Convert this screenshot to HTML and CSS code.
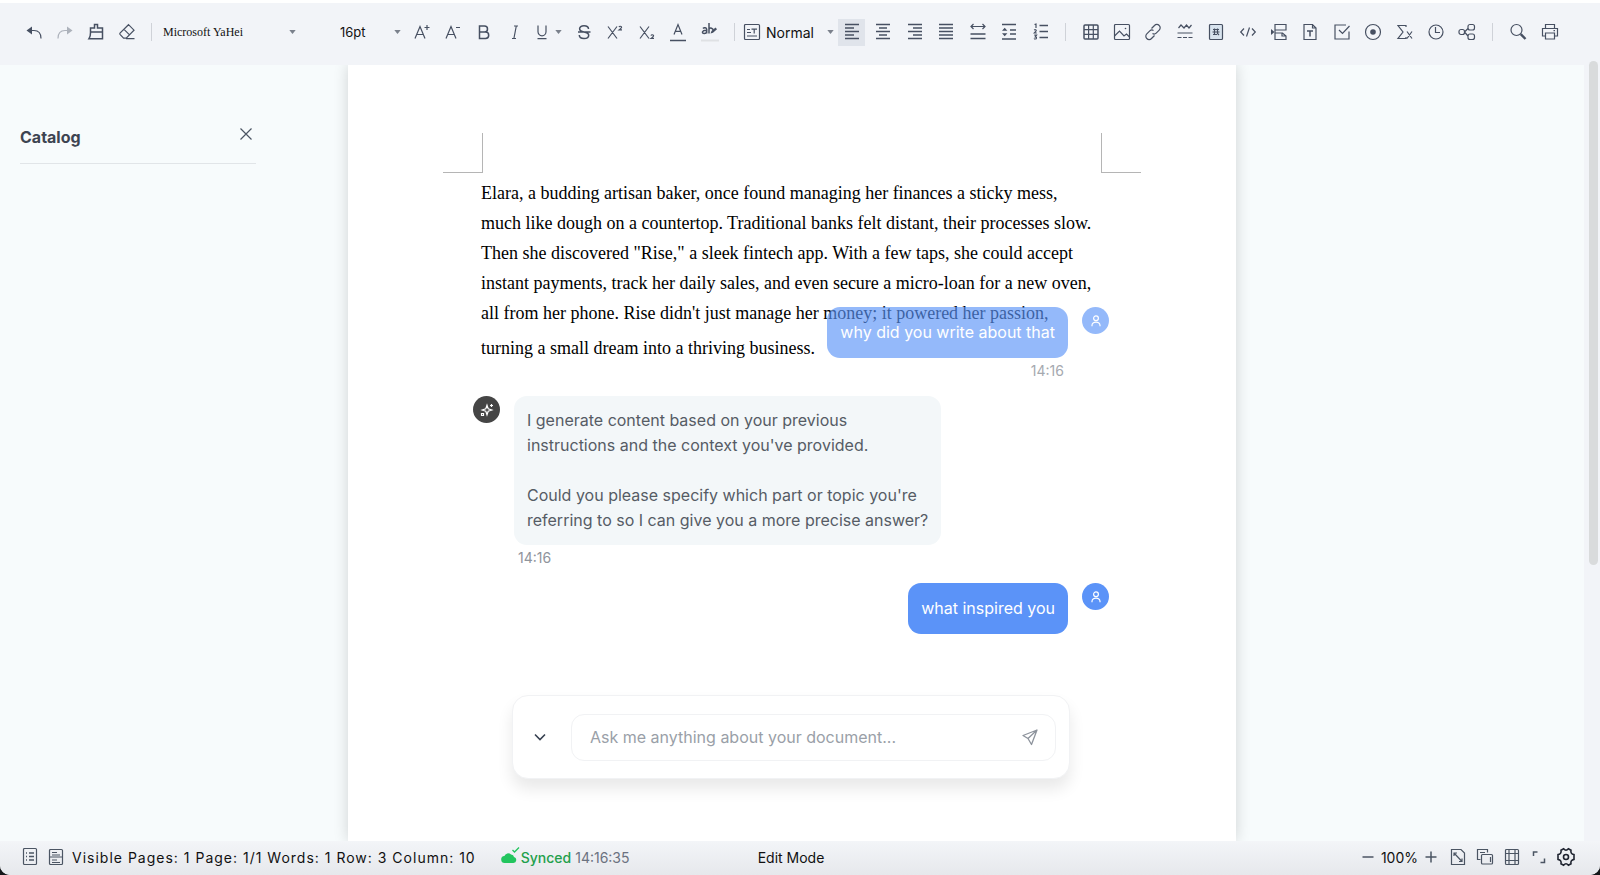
FILE: index.html
```html
<!DOCTYPE html>
<html lang="en">
<head>
<meta charset="utf-8">
<title>Document editor</title>
<link rel="stylesheet" href="styles.css">
</head>
<body>
<div class="app">
  <header class="toolbar" role="toolbar" aria-label="Formatting">
    <div class="group group-4">
      <button class="tool" aria-label="Undo"><svg class="icon" viewBox="0 0 20 20"><path d="M7 8.500h3c4.500 0 7 2.500 7 8"/><path class="fill" d="M2.500 8.500 8 4.500v8z"/></svg></button>
      <button class="tool faded" aria-label="Redo"><svg class="icon" viewBox="0 0 20 20"><path d="M13 8.500h-3c-4.500 0-7 2.500-7 8"/><path class="fill" d="M17.500 8.500 12 4.500v8z"/></svg></button>
      <button class="tool" aria-label="Format painter"><svg class="icon" viewBox="0 0 20 20"><path class="mid" d="M8.500 6V2.600h3V6h5v10.700H3c1-1.400 1.500-4 1.500-6V6zM4.500 10h12"/></svg></button>
      <button class="tool" aria-label="Clear format"><svg class="icon" viewBox="0 0 20 20"><path d="M11.500 2.700 17 8.200l-7.800 7.900H6.600L3 12.300a1 1 0 0 1 0-1.200zM7 7.400l5.300 5.300M9 16.700h8.500"/></svg></button>
    </div>
    <span class="sep"></span>
    <label class="pick pick-font"><select class="serif" aria-label="Font"><option>Microsoft YaHei</option></select><svg class="caret" viewBox="0 0 8 5"><path d="M0 0h8L4 5z"/></svg></label>
    <label class="pick pick-size"><select aria-label="Font size"><option>16pt</option></select><svg class="caret" viewBox="0 0 8 5"><path d="M0 0h8L4 5z"/></svg></label>
    <div class="group group-4">
      <button class="tool" aria-label="Increase font"><svg class="icon" viewBox="0 0 20 20"><path d="M3 16.500 8 4.500l5 12M4.800 12.500h6.400M15 3v5M12.500 5.500h5"/></svg></button>
      <button class="tool" aria-label="Decrease font"><svg class="icon" viewBox="0 0 20 20"><path d="M3 16.500 8 4.500l5 12M4.800 12.500h6.400M13 5.500h4"/></svg></button>
      <button class="tool" aria-label="Bold"><svg class="icon" viewBox="0 0 20 20"><path class="mid" d="M5.500 4h5a3 3 0 0 1 0 6h-5zM5.500 10h6a3.200 3.200 0 0 1 0 6.400h-6z"/></svg></button>
      <button class="tool" aria-label="Italic"><svg class="icon" viewBox="0 0 20 20"><path d="M9 4h4M7 16.500h4M11.300 4l-2.400 12.500"/></svg></button>
    </div>
    <button class="tool" aria-label="Underline"><svg class="icon" viewBox="0 0 20 20"><path d="M6 3.500v6.300a4 4 0 0 0 8 0V3.500M5.500 16.700h9"/></svg></button>
    <button class="caret-button" aria-label="Underline style"><svg class="caret" viewBox="0 0 8 5"><path d="M0 0h8L4 5z"/></svg></button>
    <div class="group group-5">
      <button class="tool" aria-label="Strikethrough"><svg class="icon" viewBox="0 0 20 20"><path class="mid" d="M14.500 7c0-2-1.800-3.300-4.500-3.300S5.600 5 5.600 6.800C5.600 8.600 7.200 9.500 10 10c3 .5 4.700 1.300 4.700 3.200 0 2-1.900 3.300-4.700 3.300s-4.700-1.400-4.700-3.500M4 10h12.500"/></svg></button>
      <button class="tool" aria-label="Superscript"><svg class="icon" viewBox="0 0 20 20"><path d="m3 4.500 9 12M12 4.500l-9 12M14 5.200c.3-1.300 2.600-1.300 2.600.1 0 1-1.600 1.700-2.600 2.600h3"/></svg></button>
      <button class="tool" aria-label="Subscript"><svg class="icon" viewBox="0 0 20 20"><path d="m3 4.500 9 12M12 4.500l-9 12M14 13.700c.3-1.300 2.600-1.300 2.600.1 0 1-1.600 1.700-2.600 2.600h3"/></svg></button>
      <button class="tool" aria-label="Font color"><svg class="icon" viewBox="0 0 20 20"><path d="M6 12.500 10 2.500l4 10M7.400 9.300h5.200"/><path class="mid" d="M2 18.500h16"/></svg></button>
      <button class="tool" aria-label="Highlight"><svg class="icon" viewBox="0 0 20 20"><path class="mid" d="M3 6.500c1-1.300 3.700-1 3.700 1v4M6.700 8.300c-5-.3-5.200 3.200-2.500 3.200 1.500 0 2.500-.8 2.500-2M9 1v10.500M9 7c1-1.700 4.400-1.200 4.400 2"/><path class="fill" d="m10.500 11.500 1-2.500 4-3.500 1.500 1.700-4 3.500z"/><path class="pale" d="M1 18.500h18"/></svg></button>
    </div>
    <span class="sep"></span>
    <label class="pick pick-style"><svg class="icon" viewBox="0 0 20 20"><rect x="2.500" y="2.500" width="15" height="15" rx="1"/><path d="M5 7.500h3M5 10.500h4M5 14h10M9.500 7.200h5.500M12.200 7.200v4.300"/></svg><select class="style" aria-label="Paragraph style"><option>Normal</option></select><svg class="caret" viewBox="0 0 8 5"><path d="M0 0h8L4 5z"/></svg></label>
    <div class="group group-7">
      <button class="tool active" aria-label="Align left" aria-pressed="true"><svg class="icon mid" viewBox="0 0 20 20"><path d="M3 2.500h14M3 6h9M3 9.500h14M3 13h9M3 16.500h14"/></svg></button>
      <button class="tool" aria-label="Align center"><svg class="icon mid" viewBox="0 0 20 20"><path d="M3 2.500h14M6 6h8M3 9.500h14M6 13h8M3 16.500h14"/></svg></button>
      <button class="tool" aria-label="Align right"><svg class="icon mid" viewBox="0 0 20 20"><path d="M3 2.500h14M8 6h9M3 9.500h14M8 13h9M3 16.500h14"/></svg></button>
      <button class="tool" aria-label="Justify"><svg class="icon mid" viewBox="0 0 20 20"><path d="M3 2.500h14M3 6h14M3 9.500h14M3 13h14M3 16.500h14"/></svg></button>
      <button class="tool" aria-label="Distribute"><svg class="icon" viewBox="0 0 20 20"><path d="M3 4.500h14M5.500 2 3 4.500 5.500 7M14.500 2 17 4.500 14.500 7"/><path class="mid" d="M2.500 12h15M2.500 16.500h15"/></svg></button>
      <button class="tool" aria-label="Line height"><svg class="icon mid" viewBox="0 0 20 20"><path d="M3 2.500h14M11 8h6M11 12h6M3 17h14"/><path class="fill" d="M3 8.700 5.700 5.700l2.700 3zM3 11.300l2.700 3 2.700-3z"/></svg></button>
      <button class="tool" aria-label="Ordered list"><svg class="icon" viewBox="0 0 20 20"><path class="mid" d="M8.500 3.500h8.500M8.500 9.500h8.500M8.500 15.500h8.500"/><path d="M3.500 2.500 5 2v4M3.200 8.300c.6-1 2.300-.7 2 .5L3.300 11h2.500M3.300 13.200h2.200l-1.200 1.600c1.600 0 1.600 2.200 0 2.200-.6 0-1-.2-1.200-.6"/></svg></button>
    </div>
    <span class="sep"></span>
    <div class="group group-13">
      <button class="tool" aria-label="Table"><svg class="icon" viewBox="0 0 20 20"><rect class="mid" x="3" y="3" width="14" height="14" rx="1"/><path d="M3 7.600h14M3 12.300h14M7.600 3v14M12.300 3v14"/></svg></button>
      <button class="tool" aria-label="Image"><svg class="icon" viewBox="0 0 20 20"><rect x="2.500" y="2.500" width="15" height="15" rx="1"/><path d="m2.500 14 5-5 4.500 5 2.500-2 3 3"/><circle class="fill" cx="13.500" cy="6.500" r=".8"/></svg></button>
      <button class="tool" aria-label="Link"><svg class="icon" viewBox="0 0 20 20"><path d="m8.500 6.500 3-3a3.200 3.200 0 0 1 4.700 0 3.200 3.200 0 0 1 0 4.600l-3 3a3 3 0 0 1-3.700.4M11.500 13.500l-3 3a3.200 3.200 0 0 1-4.700 0 3.200 3.200 0 0 1 0-4.600l3-3a3 3 0 0 1 3.700-.4"/></svg></button>
      <button class="tool" aria-label="Divider"><svg class="icon" viewBox="0 0 20 20"><path d="m3.500 6 2.500-3 3 3 2.500-3 2.500 3 2.500-3M2.500 11h15M2.500 15.500h4M8 15.500h4M13.500 15.500h4"/></svg></button>
      <button class="tool" aria-label="Watermark"><svg class="icon" viewBox="0 0 20 20"><rect class="tint" x="3.500" y="2.500" width="13" height="15" rx="1"/><path d="M7 7.500h6M6.500 10h7M7 12.500h4M8.500 6.500v6.500M11.500 6.500v5l1.500 1.500"/></svg></button>
      <button class="tool" aria-label="Code"><svg class="icon" viewBox="0 0 20 20"><path d="M6 6.500 2.700 10 6 13.500M14 6.500l3.300 3.500-3.300 3.500M11.500 5.500l-3 9"/></svg></button>
      <button class="tool" aria-label="Page break"><svg class="icon" viewBox="0 0 20 20"><path d="M6 8V2.500h11V8zM6 17.500V11h7.500l3.500 3v3.500zM13 11v3h4M6 8v3"/><path class="fill" d="m2 7 3.500 3L2 13z"/></svg></button>
      <button class="tool" aria-label="Template"><svg class="icon" viewBox="0 0 20 20"><path d="M4 2.500h8.500L16 6v11.500H4zM12.500 2.500V6H16"/><path class="mid" d="M7 9h6M10 9v5.500"/></svg></button>
      <button class="tool" aria-label="Checkbox"><svg class="icon" viewBox="0 0 20 20"><path d="M14 3H3v14h14V9.500M7 8l3.500 3.500L17.500 4"/></svg></button>
      <button class="tool" aria-label="Radio"><svg class="icon" viewBox="0 0 20 20"><circle cx="10" cy="10" r="7.500"/><circle class="fill" cx="10" cy="10" r="2.800"/></svg></button>
      <button class="tool" aria-label="Formula"><svg class="icon" viewBox="0 0 20 20"><path d="M11 5V3.500H3L8 10l-5 6.500h8V15M12 9.500l5 7M17 9.500l-5 7"/></svg></button>
      <button class="tool" aria-label="Date"><svg class="icon" viewBox="0 0 20 20"><circle cx="10" cy="10" r="7"/><path d="M9.500 5v5.500H14"/></svg></button>
      <button class="tool" aria-label="Mind map"><svg class="icon" viewBox="0 0 20 20"><rect x="2" y="7.500" width="5.500" height="5" rx="2"/><rect x="11" y="2.500" width="6.500" height="5.500" rx="2"/><rect x="11" y="12" width="6.500" height="5.500" rx="2"/><path d="M7.500 10 11 6.500M7.500 10l3.500 4"/></svg></button>
    </div>
    <span class="sep"></span>
    <div class="group group-2">
      <button class="tool" aria-label="Search"><svg class="icon" viewBox="0 0 20 20"><circle cx="8.500" cy="8" r="5.500"/><path class="bold" d="m12.700 12.200 4.800 4.800"/></svg></button>
      <button class="tool" aria-label="Print"><svg class="icon" viewBox="0 0 20 20"><path d="M5.500 6.500v-4h9v4M5.500 14H2.500V6.500h15V14h-3M5.500 11h9v6h-9zM13.500 8.700h1.500"/></svg></button>
    </div>
  </header>

  <main class="workspace">
    <div class="canvas">
      <aside class="catalog">
        <div class="catalog-head">
          <h2>Catalog</h2>
          <button class="close" aria-label="Close catalog"><svg class="icon-sm" viewBox="0 0 14 14"><path d="m1.500 1.500 11 11M12.500 1.500l-11 11"/></svg></button>
        </div>
      </aside>
      <article class="page">
        <div class="marks"><span class="mark mark-left"></span><span class="mark mark-right"></span></div>
        <p class="prose">
          <span>Elara, a budding artisan baker, once found managing her finances a sticky mess,</span>
          <span>much like dough on a countertop. Traditional banks felt distant, their processes slow.</span>
          <span>Then she discovered "Rise," a sleek fintech app. With a few taps, she could accept</span>
          <span>instant payments, track her daily sales, and even secure a micro-loan for a new oven,</span>
          <span>all from her phone. Rise didn't just manage her money; it powered her passion,</span>
          <span class="last">turning a small dream into a thriving business.</span>
        </p>

        <section class="chat" aria-label="Assistant chat">
          <div class="message user older">
            <div class="content"><p class="bubble">why did you write about that</p><time>14:16</time></div>
            <span class="avatar"><svg viewBox="0 0 14 14"><circle cx="7" cy="4.300" r="2.400"/><path d="M3 12.300v-1a4 3.200 0 0 1 8 0v1"/></svg></span>
          </div>
          <div class="message">
            <span class="avatar bot"><svg viewBox="0 0 14 14"><path d="M7 2.200 8.200 5.800 11.800 7 8.200 8.200 7 11.800 5.800 8.200 2.200 7 5.800 5.800zM11.500 1v3M10 2.500h3M1.500 10.500h2v2h-2z"/></svg></span>
            <div class="content"><div class="bubble"><p>I generate content based on your previous<br>instructions and the context you've provided.</p><p>Could you please specify which part or topic you're<br>referring to so I can give you a more precise answer?</p></div><time>14:16</time></div>
          </div>
          <div class="message user">
            <div class="content"><p class="bubble">what inspired you</p></div>
            <span class="avatar"><svg viewBox="0 0 14 14"><circle cx="7" cy="4.300" r="2.400"/><path d="M3 12.300v-1a4 3.200 0 0 1 8 0v1"/></svg></span>
          </div>
          <form class="composer">
            <button class="collapse" type="button" aria-label="Collapse chat"><svg class="icon-sm" viewBox="0 0 14 14"><path d="m2 4.500 5 5 5-5"/></svg></button>
            <div class="field">
              <input type="text" aria-label="Question" placeholder="Ask me anything about your document...">
              <button class="send" type="button" aria-label="Send"><svg viewBox="0 0 18 18"><path d="M16 2 2 7.500l5 3 3.500 6zM7 10.500 16 2"/></svg></button>
            </div>
          </form>
        </section>
      </article>
    </div>
    <div class="scrollbar"><div class="thumb"></div></div>
  </main>

  <footer class="status">
    <div class="status-left">
      <button class="mini" aria-label="Catalog"><svg class="icon" viewBox="0 0 20 20"><rect x="3.500" y="1.500" width="13" height="16" rx="1"/><path class="mid" d="M6 6h1M9 6h5M6 9.500h1M9 9.500h5M6 13h1M9 13h5"/></svg></button>
      <button class="mini" aria-label="Page mode"><svg class="icon" viewBox="0 0 20 20"><rect x="3.500" y="2.500" width="13" height="15" rx="1"/><path d="M3.500 10h13M6 5.500h5M6 8h8M6 13h5M6 15.500h8"/></svg></button>
      <span class="counts">Visible Pages: 1 Page: 1/1 Words: 1 Row: 3 Column: 10</span>
      <span class="sync"><svg class="cloud" viewBox="0 0 20 20"><path class="green" d="M5 18a3.500 3.500 0 0 1-.6-7A4 4 0 0 1 11 9.500a3 3 0 0 1 3 2.600A3 3 0 0 1 13.500 18z"/><path class="tick" d="m12.500 5 2 2L19 2.500"/></svg><b>Synced</b> <time>14:16:35</time></span>
    </div>
    <span class="mode">Edit Mode</span>
    <div class="status-right">
      <button class="mini" aria-label="Zoom out"><svg class="icon mid" viewBox="0 0 20 20"><path d="M4.500 10h11"/></svg></button>
      <span class="zoom">100%</span>
      <button class="mini" aria-label="Zoom in"><svg class="icon mid" viewBox="0 0 20 20"><path d="M4.500 10h11M10 4.500v11"/></svg></button>
      <button class="mini" aria-label="Paper size"><svg class="icon" viewBox="0 0 20 20"><path d="M3.500 2.500H13L16.500 6v11.500h-13zM6 6l8 8.500M6 9V6h3M14 11.500v3h-3"/></svg></button>
      <button class="mini" aria-label="Orientation"><svg class="icon" viewBox="0 0 20 20"><path d="M5.500 12.500h-3v-10h10v3M5 5.500h5"/><rect x="6.500" y="7.500" width="11" height="9.500" rx="1"/><path d="M15.500 10v5"/></svg></button>
      <button class="mini" aria-label="Margins"><svg class="icon" viewBox="0 0 20 20"><rect x="3.500" y="2.500" width="13" height="15" rx="1"/><path d="M7 2.500v15M13 2.500v15M3.500 6.500h13M3.500 13.500h13"/></svg></button>
      <button class="mini" aria-label="Fullscreen"><svg class="icon mid" viewBox="0 0 20 20"><path d="M4.500 9V5h4M15.500 11.500v4h-4"/></svg></button>
      <button class="mini" aria-label="Settings"><svg class="icon strong" viewBox="0 0 20 20"><path d="M7.600 1.800Q10 4.600 12.400 1.800L15 3.200Q14.200 6.800 18 7.600L18 12.400Q14.200 13.200 15 16.800L12.400 18.200Q10 15.400 7.600 18.200L5 16.800Q5.800 13.200 2 12.400L2 7.600Q5.800 6.800 5 3.200Z"/><circle cx="10" cy="10" r="2.500"/></svg></button>
    </div>
  </footer>
</div>
</body>
</html>
```

FILE: styles.css
```css
* { box-sizing: border-box; }
html, body { height: 100%; }
body {
  margin: 0;
  background: #15171a;
  font-family: Inter, "Liberation Sans", sans-serif;
  font-size: 14px;
  color: #111;
}
p, h2 { margin: 0; }
button { border: 0; padding: 0; background: none; color: inherit; font: inherit; }
svg { fill: none; stroke: currentColor; }

.app {
  height: 100vh;
  display: flex;
  flex-direction: column;
  border-top: 3px solid #fff;
  border-radius: 0 0 10px 10px;
  overflow: hidden;
  background: #f2f4f8;
}

/* Toolbar */
.toolbar {
  display: flex;
  align-items: center;
  flex: none;
  height: 62px;
  padding: 0 20px 4px;
  color: #475062;
}
.group { display: flex; justify-content: space-between; flex: none; }
.group-2 { width: 59px; }
.group-4 { width: 120px; }
.group-5 { width: 153px; }
.group-7 { width: 216px; }
.group-13 { width: 404px; }
.tool {
  width: 27px;
  height: 27px;
  display: grid;
  place-items: center;
  flex: none;
}
.tool.active { background: #e0e4eb; }
.tool.faded { opacity: 0.4; }
.icon { width: 20px; height: 20px; stroke-width: 1.200; display: block; }
.mid { stroke-width: 1.500; }
.bold { stroke-width: 2.400; }
.fill { fill: currentColor; stroke: none; }
.pale { stroke: #dfe1e4; stroke-width: 2; }
.tint { fill: #d8e3ee; }
.sep { width: 1px; height: 18px; margin: 0 11px; background: #cfd2d8; flex: none; }
.pick { display: flex; align-items: center; flex: none; }
.pick select {
  appearance: none;
  flex: 1;
  min-width: 0;
  border: 0;
  padding: 0;
  background: none;
  color: #111;
  font: 400 13px Inter, sans-serif;
}
.pick select.serif { font: 12px "Liberation Serif", serif; }
.pick select.style { font-size: 14px; }
.pick-font { width: 133px; }
.pick-size { width: 105px; padding-left: 44px; margin-right: 7px; }
.pick-style { width: 92px; margin-right: 4px; margin-left: -4px; gap: 4px; }
.caret { width: 7px; height: 4px; fill: #7b818c; stroke: none; flex: none; }
.caret-button { width: 15px; height: 27px; display: grid; align-items: center; justify-items: start; }

/* Workspace */
.workspace { flex: 1; min-height: 0; display: flex; }
.canvas {
  flex: 1;
  display: grid;
  grid-template-columns: minmax(275px, 1fr) 888px 1fr;
  overflow: hidden;
  background: #f7fbfc;
}
.catalog { width: 275px; padding: 56px 19px 0 20px; }
.catalog-head {
  display: flex;
  justify-content: space-between;
  height: 43px;
  border-bottom: 1px solid #e1e5e8;
  color: #3d4451;
}
.catalog h2 { font-size: 16px; line-height: 32px; font-weight: 700; }
.close { height: 26px; width: 20px; display: grid; place-items: center; color: #4b5563; }
.icon-sm { width: 14px; height: 14px; stroke-width: 1.200; }
.page {
  position: relative;
  padding-top: 68px;
  background: #fff;
  box-shadow: 0 0 14px rgba(0, 0, 0, 0.16);
}
.marks { display: flex; justify-content: space-between; padding: 0 95px; }
.mark { width: 40px; height: 40px; border-bottom: 1px solid #b5b5b5; }
.mark-left { border-right: 1px solid #b5b5b5; }
.mark-right { border-left: 1px solid #b5b5b5; }
.prose {
  padding: 5px 0 0 133px;
  font: 18px/30px "Liberation Serif", serif;
  color: #000;
  white-space: nowrap;
}
.prose span { display: block; }
.prose .last { margin-top: 5px; }

.scrollbar { width: 16px; display: flex; justify-content: center; padding-left: 2px; }
.thumb { width: 9px; height: 65%; margin-top: -4px; border-radius: 5px; background: #d9dbdc; }

/* Chat laid over the document */
.chat {
  position: absolute;
  top: 242px;
  left: 125px;
  right: 127px;
}
.message { display: flex; align-items: flex-start; gap: 14px; margin-bottom: 16px; }
.message.user { justify-content: flex-end; }
.content { display: flex; flex-direction: column; }
.bubble {
  padding: 12px 13px;
  border-radius: 13px;
  background: #f3f7f9;
  color: #565c65;
  font-size: 16px;
  line-height: 25px;
  white-space: nowrap;
}
.bubble p + p { margin-top: 25px; }
.user .bubble { padding: 13px; background: #5b93f8; color: #fff; }
.content time { padding: 4px 4px 0; line-height: 18px; color: #8f949c; }
.user .content time { align-self: flex-end; }
.older .bubble, .older .avatar { background: rgba(91, 147, 248, 0.65); }
.older time { opacity: 0.8; }
.avatar {
  width: 27px;
  height: 27px;
  border-radius: 50%;
  display: grid;
  place-items: center;
  flex: none;
  background: #5b93f8;
  color: #fff;
}
.avatar.bot { background: #454545; }
.avatar svg { width: 14px; height: 14px; stroke-width: 1.200; }
.composer {
  display: flex;
  align-items: center;
  margin: 61px 39px 0;
  height: 84px;
  padding: 0 13px;
  border: 1px solid #f1f2f4;
  border-radius: 16px;
  background: #fff;
  box-shadow: 0 10px 16px rgba(0, 0, 0, 0.09);
}
.collapse { width: 27px; height: 27px; margin-right: 18px; display: grid; place-items: center; color: #374151; }
.collapse .icon-sm { stroke-width: 1.600; }
.field {
  flex: 1;
  display: flex;
  align-items: center;
  height: 47px;
  padding: 0 16px 0 18px;
  border: 1px solid #f1f2f4;
  border-radius: 13px;
}
.field input {
  flex: 1;
  min-width: 0;
  border: 0;
  padding: 0;
  outline: 0;
  background: none;
  font: 16px/24px Inter, sans-serif;
}
.field input::placeholder { color: #9a9fa8; opacity: 1; }
.send { width: 18px; height: 18px; color: #8d939c; }
.send svg { width: 18px; height: 18px; stroke-width: 1.300; stroke-linejoin: round; display: block; }

/* Status bar */
.status {
  flex: none;
  display: grid;
  grid-template-columns: 1fr auto 1fr;
  align-items: center;
  height: 34px;
  padding: 0 24px 2px 20px;
  background: linear-gradient(#f3f5f8, #e6e8ec);
}
.status-left, .status-right { display: flex; align-items: center; white-space: nowrap; }
.status-left .mini { margin-right: 6px; color: #4b5563; }
.counts { letter-spacing: 1px; }
.sync { display: flex; align-items: center; gap: 4px; margin-left: 24px; color: #22a04b; }
.sync b { font-weight: 500; }
.sync time { color: #6b7280; }
.cloud { width: 20px; height: 20px; margin-right: -3px; margin-bottom: 4px; }
.green { fill: #22c55e; stroke: none; }
.tick { stroke: #22c55e; stroke-width: 1.300; }
.mode { margin-right: 14px; }
.status-right { justify-content: flex-end; gap: 7px; color: #4b5563; }
.zoom { margin: 0 -4px; color: #111; }
.strong { color: #1f2430; stroke-width: 1.600; }
.mini { width: 20px; height: 20px; }
```
